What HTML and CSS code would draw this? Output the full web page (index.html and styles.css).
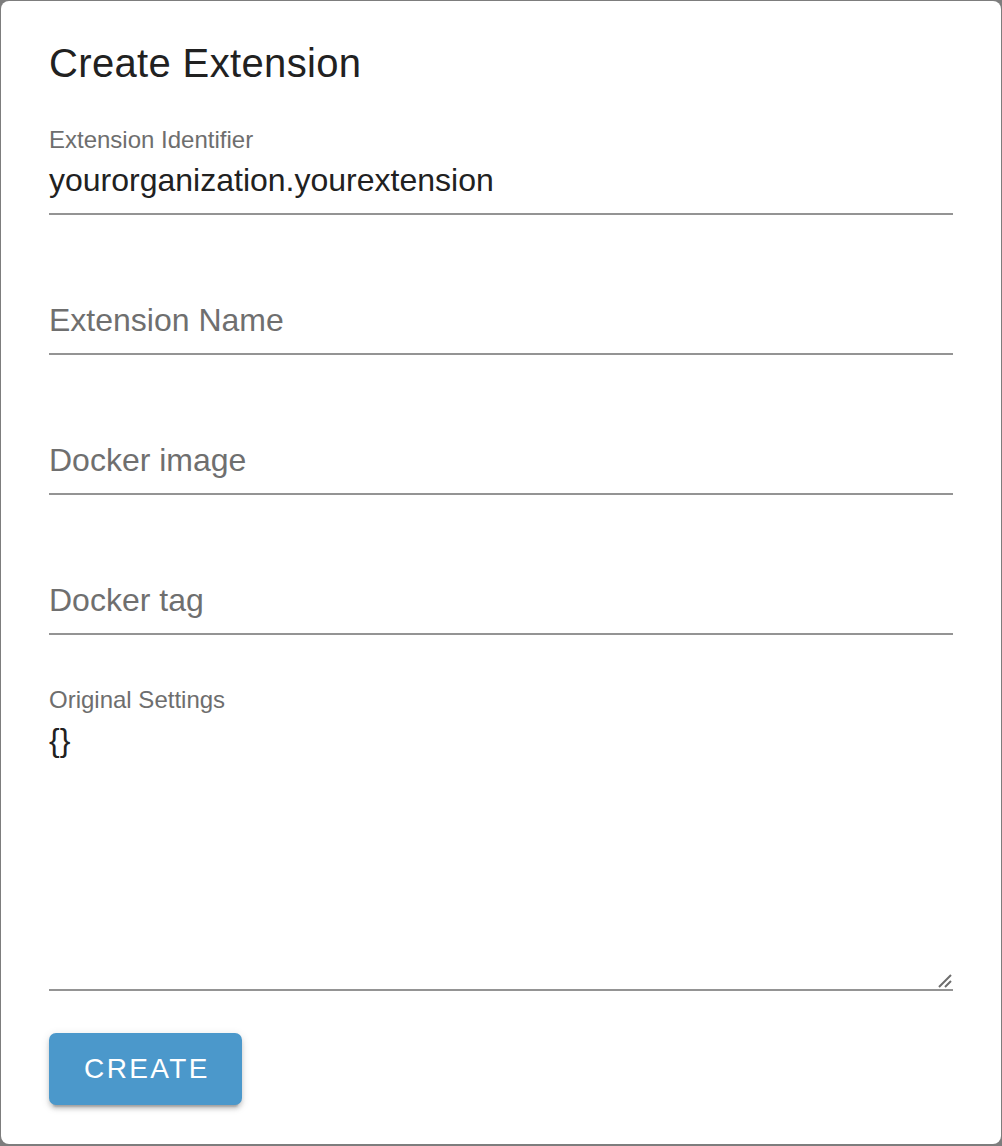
FILE: index.html
```html
<!DOCTYPE html>
<html lang="en">
<head>
<meta charset="utf-8">
<title>Create Extension</title>
<link rel="stylesheet" href="styles.css">
</head>
<body>
<div class="dialog">
  <h2 class="title">Create Extension</h2>
  <div class="fields">
    <div class="field">
      <div class="label">Extension Identifier</div>
      <div class="input">yourorganization.yourextension</div>
    </div>
    <div class="field">
      <div class="label"></div>
      <div class="input placeholder">Extension Name</div>
    </div>
    <div class="field">
      <div class="label"></div>
      <div class="input placeholder">Docker image</div>
    </div>
    <div class="field">
      <div class="label"></div>
      <div class="input placeholder">Docker tag</div>
    </div>
    <div class="field">
      <div class="label">Original Settings</div>
      <div class="input textarea">{}
        <svg class="grip" width="16" height="16" viewBox="0 0 16 16" aria-hidden="true">
          <path d="M2 14 L14 2 M8 14 L14 8" stroke="#6e6e6e" stroke-width="2" fill="none"/>
        </svg>
      </div>
    </div>
  </div>
  <div class="actions">
    <button class="btn" type="button">Create</button>
  </div>
</div>
</body>
</html>
```

FILE: styles.css
```css
html, body {
  margin: 0;
  padding: 0;
}
body {
  background: #7d7d7d;
  width: 1002px;
  height: 1146px;
  overflow: hidden;
  font-family: "Liberation Sans", Arial, Helvetica, sans-serif;
}
.dialog {
  box-sizing: border-box;
  margin: 1px 0 0 1px;
  width: 1000px;
  height: 1143px;
  background: #ffffff;
  border-radius: 8px;
  padding: 38px 48px 0 48px;
}
.title {
  margin: 0;
  font-size: 40px;
  line-height: 48px;
  font-weight: 400;
  letter-spacing: 0.35px;
  color: #212121;
}
.fields {
  display: flex;
  flex-direction: column;
  gap: 52px;
  margin-top: 40px;
}
.field {
  display: flex;
  flex-direction: column;
}
.label {
  height: 28px;
  margin-bottom: 7px;
  margin-top: -1px;
  font-size: 24px;
  line-height: 28px;
  color: #6e6e6e;
}
.input {
  position: relative;
  font-size: 32px;
  line-height: 38px;
  height: 38px;
  padding-bottom: 14px;
  border-bottom: 2px solid #949494;
  color: #212121;
  white-space: nowrap;
}
.placeholder {
  color: #6f6f6f;
}
.textarea {
  height: 254px;
}
.grip {
  position: absolute;
  right: 0;
  bottom: 0;
}
.actions {
  margin-top: 42px;
}
.btn {
  width: 193px;
  height: 72px;
  border: 0;
  border-radius: 7px;
  background: #4b98cb;
  color: #ffffff;
  font-family: "Liberation Sans", Arial, Helvetica, sans-serif;
  font-size: 28px;
  letter-spacing: 2.4px;
  text-transform: uppercase;
  padding: 0 0 0 3px;
  box-shadow: 0 6px 2px -4px rgba(0,0,0,0.2), 0 4px 4px 0 rgba(0,0,0,0.14), 0 2px 10px 0 rgba(0,0,0,0.12);
  cursor: pointer;
}
```
